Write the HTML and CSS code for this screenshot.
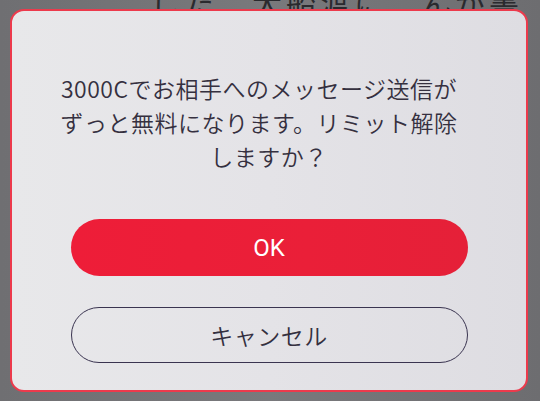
FILE: index.html
```html
<!DOCTYPE html>
<html lang="ja">
<head>
<meta charset="utf-8">
<link rel="stylesheet" href="styles.css">
</head>
<body>
<div class="behind"><span class="behind-text">した、大船渡に、んが書（　）（　）</span></div>
<div class="dialog">
  <p class="message"><span class="line line-shift">3000Cでお相手へのメッセージ送信が</span><span class="line line-shift">ずっと無料になります。リミット解除</span><span class="line">しますか？</span></p>
  <div class="actions">
    <button class="btn btn-ok">OK</button>
    <button class="btn btn-cancel">キャンセル</button>
  </div>
</div>
</body>
</html>
```
FILE: styles.css
```css
html, body {
  margin: 0;
  padding: 0;
}
body {
  width: 540px;
  height: 401px;
  background: linear-gradient(90deg, #6f6f72 0%, #79797c 50%, #6d6d70 100%);
  font-family: "Noto Sans CJK JP", "Noto Sans", sans-serif;
  overflow: hidden;
}
.behind {
  height: 9px;
  overflow: hidden;
  display: flex;
  align-items: flex-end;
  padding-left: 150px;
}
.behind-text {
  display: block;
  font-size: 30px;
  line-height: 30px;
  color: #2a2a2e;
  white-space: nowrap;
  margin-bottom: -8px;
  letter-spacing: 4px;
}
.dialog {
  margin-left: 10px;
  width: 514px;
  height: 379px;
  border: 2px solid #ec3a4c;
  border-radius: 14px;
  background: linear-gradient(90deg, #e8e8ea 0%, #e4e3e7 50%, #dedde2 100%);
  display: flex;
  flex-direction: column;
  align-items: center;
}
.message {
  margin: 60px 0 0;
  font-size: 23px;
  font-weight: 350;
  line-height: 34px;
  letter-spacing: 0.5px;
  color: #35303f;
  text-align: center;
}
.line {
  display: block;
}
.line-shift {
  padding-right: 20px;
}
.actions {
  margin-top: 46px;
  display: flex;
  flex-direction: column;
  gap: 31px;
}
.btn {
  width: 397px;
  border-radius: 29px;
  font-family: "Noto Sans CJK JP", sans-serif;
  display: flex;
  align-items: center;
  justify-content: center;
  padding: 0;
  box-sizing: border-box;
}
.btn-ok {
  height: 57px;
  background: linear-gradient(90deg, #ee1d38 0%, #ea1f38 60%, #e52038 100%);
  border: none;
  color: #ffffff;
  font-family: Roboto, "Noto Sans", sans-serif;
  font-size: 24px;
}
.btn-cancel {
  height: 56px;
  background: transparent;
  border: 1.5px solid #3a3450;
  color: #34303f;
  font-size: 23px;
  font-weight: 350;
  letter-spacing: 0.5px;
}
```
